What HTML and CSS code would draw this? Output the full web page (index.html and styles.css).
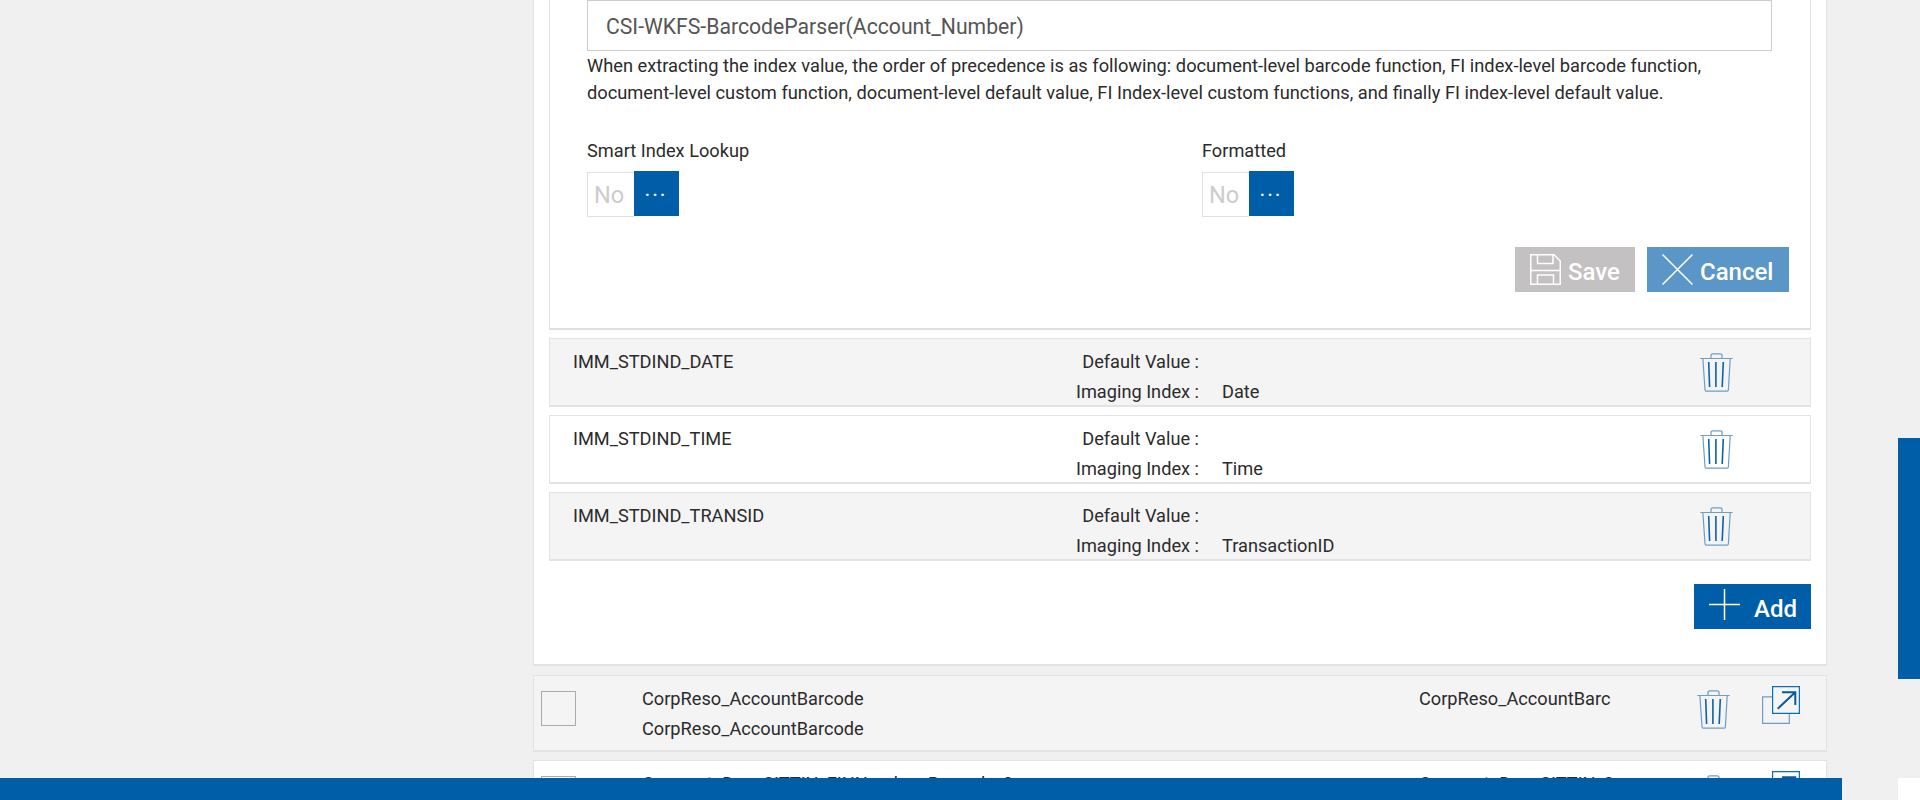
FILE: index.html
```html
<!DOCTYPE html>
<html lang="en">
<head>
<meta charset="utf-8">
<title>Index configuration</title>
<link rel="stylesheet" href="styles.css">
</head>
<body>
<svg class="defs" aria-hidden="true">
  <symbol id="trash" viewBox="0 0 33 39">
    <path class="t-line" d="M11 5V2.6Q11 .8 13 .8H20Q22 .8 22 2.6V5M.3 5.5H32.7M2.9 6L5 36.8Q5.2 38.2 6.6 38.2H26.8Q28.2 38.2 28.4 36.8L30.2 6"/>
    <path class="t-bar" d="M8.7 9L9.6 34M15.9 9V34M23.3 9L22.2 34"/>
  </symbol>
  <symbol id="popout" viewBox="0 0 38 38">
    <path class="p-back" d="M10.5 10.8H.6V37.4H27.3V27.5"/>
    <path class="p-front" d="M10.6.6H37.4V27.4H10.6Z"/>
    <path class="p-arrow" d="M15.7 22.7L33 6.5M20 6.3H33.3V19"/>
  </symbol>
</svg>
<main class="panel">
  <section class="outer">
    <div class="card">
      <div class="field">CSI-WKFS-BarcodeParser(Account_Number)</div>
      <p class="hint">When extracting the index value, the order of precedence is as following: document-level barcode function, FI index-level barcode function, document-level custom function, document-level default value, FI Index-level custom functions, and finally FI index-level default value.</p>
      <div class="options">
        <div class="option">
          <div class="opt-label">Smart Index Lookup</div>
          <div class="toggle"><span class="no">No</span><span class="dots">...</span></div>
        </div>
        <div class="option">
          <div class="opt-label">Formatted</div>
          <div class="toggle"><span class="no">No</span><span class="dots">...</span></div>
        </div>
      </div>
      <div class="actions">
        <button class="btn btn-save" type="button">
          <svg class="ic" viewBox="0 0 31 31"><path d="M.75.75H24L30.25 7V30.25H.75ZM7.5 1V9.5H23V1M1 16.5H30M7.5 30V21H23.5V30"/></svg><span class="btn-text">Save</span>
        </button>
        <button class="btn btn-cancel" type="button">
          <svg class="ic" viewBox="0 0 31 31"><path d="M.5.5L30.5 30.5M30.5.5L.5 30.5"/></svg><span class="btn-text">Cancel</span>
        </button>
      </div>
    </div>

    <div class="idx">
      <div class="idx-name">IMM_STDIND_DATE</div>
      <div class="idx-labels"><div>Default Value :</div><div>Imaging Index :</div></div>
      <div class="idx-vals"><div>&nbsp;</div><div>Date</div></div>
      <svg class="trash"><use href="#trash"/></svg>
    </div>
    <div class="idx idx-white">
      <div class="idx-name">IMM_STDIND_TIME</div>
      <div class="idx-labels"><div>Default Value :</div><div>Imaging Index :</div></div>
      <div class="idx-vals"><div>&nbsp;</div><div>Time</div></div>
      <svg class="trash"><use href="#trash"/></svg>
    </div>
    <div class="idx">
      <div class="idx-name">IMM_STDIND_TRANSID</div>
      <div class="idx-labels"><div>Default Value :</div><div>Imaging Index :</div></div>
      <div class="idx-vals"><div>&nbsp;</div><div>TransactionID</div></div>
      <svg class="trash"><use href="#trash"/></svg>
    </div>

    <div class="add-wrap">
      <button class="btn btn-add" type="button">
        <svg class="ic" viewBox="0 0 31 31"><path d="M15.5 0V31M0 15.5H31"/></svg><span class="btn-text">Add</span>
      </button>
    </div>
  </section>

  <section class="doc">
    <span class="check"></span>
    <div class="doc-names"><div>CorpReso_AccountBarcode</div><div>CorpReso_AccountBarcode</div></div>
    <div class="doc-short">CorpReso_AccountBarc</div>
    <svg class="trash doc-trash"><use href="#trash"/></svg>
    <svg class="popout"><use href="#popout"/></svg>
  </section>
  <section class="doc doc-white">
    <span class="check"></span>
    <div class="doc-names"><div>CorporateDep_CITTIN_FINNumber_Barcode_0</div><div>CorporateDep_CITTIN_FINNumber_Barcode_0</div></div>
    <div class="doc-short">CorporateDep_CITTIN_0</div>
    <svg class="trash doc-trash"><use href="#trash"/></svg>
    <svg class="popout"><use href="#popout"/></svg>
  </section>
</main>
<div class="scroll-thumb"></div>
<div class="footer-bar"></div>
<div class="footer-corner"></div>
</body>
</html>
```
FILE: styles.css
```css
* { box-sizing: border-box; }
html, body { margin: 0; height: 800px; overflow: hidden; }
body {
  background: #f0f0f0;
  color: #2b2b2b;
  font-family: Roboto, "Liberation Sans", sans-serif;
  font-size: 18.2px;
}
.defs { position: absolute; width: 0; height: 0; }

.panel { width: 1294px; height: 800px; margin-left: 533px; overflow: hidden; }
.outer {
  height: 666px;
  padding: 0 15px;
  background: #fff;
  border-left: 1px solid #e3e3e3;
  border-right: 1px solid #e3e3e3;
  border-bottom: 2px solid #e3e3e3;
}

.card {
  height: 330px;
  padding-left: 37px;
  border: 1px solid #e0e0e0;
  border-top: 0;
  border-bottom-width: 2px;
}
.field {
  width: 1185px;
  height: 51px;
  padding-left: 18px;
  border: 1px solid #ccc;
  color: #555;
  font-size: 21.2px;
  line-height: 51px;
}
.hint { width: 1200px; margin: 1px 0 0; font-size: 18.28px; line-height: 27px; }

.options { display: flex; margin-top: 33px; }
.option { flex: none; width: 615px; }
.opt-label { line-height: 24px; }
.toggle { display: flex; align-items: flex-start; margin-top: 9px; }
.no {
  width: 47px;
  height: 45px;
  padding-left: 6px;
  border: 1px solid #e0e0e0;
  border-right: 0;
  color: #ccc;
  font-size: 23.5px;
  line-height: 45px;
}
.dots {
  width: 45px;
  height: 45px;
  margin-top: -1px;
  background: #005ea8;
  color: #fff;
  font-size: 16px;
  font-weight: 700;
  letter-spacing: 3px;
  line-height: 40px;
  text-align: center;
}

.actions { display: flex; justify-content: flex-end; gap: 12px; margin-top: 30px; padding-right: 21px; }
.btn {
  display: flex;
  align-items: center;
  height: 45px;
  padding: 0;
  border: 0;
  color: #fff;
  font-family: inherit;
  font-size: 24px;
  font-weight: 500;
  line-height: 28px;
}
.btn-text { margin-top: 5px; }
.ic { width: 31px; height: 31px; fill: none; stroke: #fff; stroke-width: 1.5; }
.btn-save { width: 120px; padding-left: 15px; gap: 7px; background: #c3c1c1; }
.btn-cancel { width: 142px; padding-left: 15px; gap: 7px; background: #5a96c8; }
.btn-add { width: 117px; padding-left: 15px; gap: 14px; background: #005ea8; }
.btn-add .ic { margin-top: -4px; }

.idx {
  display: flex;
  align-items: flex-start;
  height: 69px;
  margin-top: 8px;
  padding: 8px 0 0 23px;
  background: #f4f4f4;
  border: 1px solid #e3e3e3;
  border-bottom-width: 2px;
  line-height: 30px;
}
.idx-white { background: #fff; }
.idx-name { width: 300px; }
.idx-labels { width: 326px; text-align: right; }
.idx-vals { width: 501px; padding-left: 23px; }
.trash { width: 33px; height: 39px; margin-top: 6px; }

.t-line { fill: none; stroke: #6f9dc4; stroke-width: 1.2; }
.t-bar { fill: none; stroke: #0a62aa; stroke-width: 1.6; }
.p-back { fill: none; stroke: #6f9dc4; stroke-width: 1.2; }
.p-front { fill: none; stroke: #0a70b5; stroke-width: 1.2; }
.p-arrow { fill: none; stroke: #0b5a9e; stroke-width: 2; }

.add-wrap { display: flex; justify-content: flex-end; margin-top: 23px; }

.doc {
  display: flex;
  align-items: flex-start;
  height: 77px;
  margin-top: 9px;
  padding: 8px 0 0 7px;
  background: #f4f4f4;
  border: 1px solid #e3e3e3;
  border-bottom-width: 2px;
  line-height: 30px;
}
.doc-white { margin-top: 8px; background: #fff; }
.check { width: 35px; height: 35px; margin-top: 7px; border: 1px solid #aaa; }
.doc-names { width: 777px; margin-left: 66px; }
.doc-short { width: 278px; }
.doc-trash { margin-top: 6px; }
.popout { width: 38px; height: 38px; margin: 2px 0 0 32px; }

.scroll-thumb { position: fixed; top: 438px; left: 1898px; width: 22px; height: 241px; background: #005ea8; }
.footer-bar { position: fixed; left: 0; top: 778px; width: 1842px; height: 22px; background: #005ea8; }
.footer-corner { position: fixed; left: 1898px; top: 778px; width: 22px; height: 22px; background: #fff; }
```
